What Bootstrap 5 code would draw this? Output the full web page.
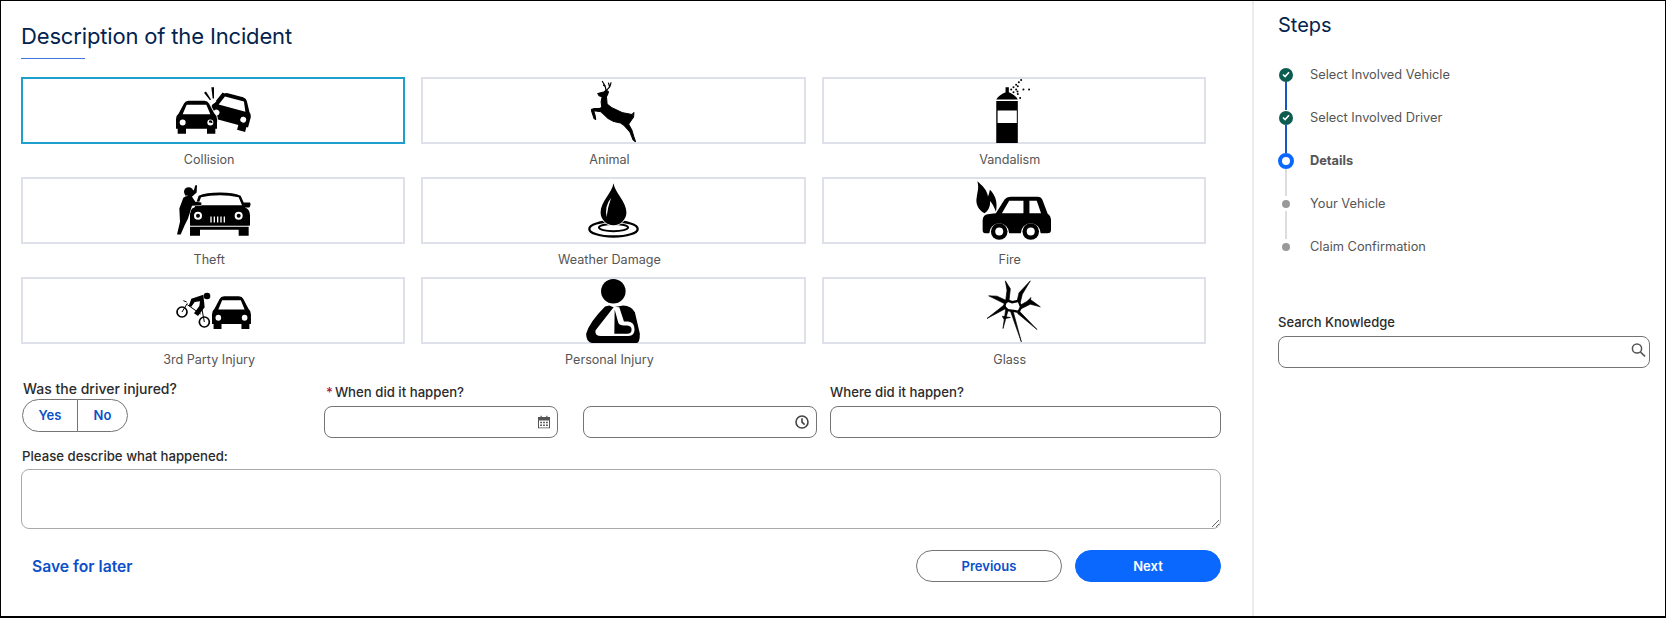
<!DOCTYPE html>
<html lang="en">
<head>
    <meta charset="UTF-8">
    <title>Description of the Incident</title>
    <link href="https://cdn.jsdelivr.net/npm/bootstrap@5.3.0/dist/css/bootstrap.min.css" rel="stylesheet">
    <style>
        body { margin: 0; background: #fff; font-family: Inter, "Liberation Sans", sans-serif; font-size: 13px; color: #444; }
        .page-frame { width: 1666px; height: 618px; border: 1px solid #000; border-bottom-width: 2px; }
        .main-pane { width: 1251px; padding: 0 0 0 20px; flex: none; }
        .main-body { width: 1200px; }
        .side-pane { flex: 1; border-left: 2px solid #ececec; padding: 0 15px 0 24px; }
        .pane-title { font-size: 22px; font-weight: 400; color: #03234d; line-height: 30px; margin: 20px 0 0; letter-spacing: -.16px; }
        .title-rule { width: 64px; height: 1px; background: #3f74e0; margin: 7px 0 18px; }
        .tile-grid { display: grid; grid-template-columns: repeat(3, 384.3px); column-gap: 16px; }
        .tile-item { height: 100px; text-align: center; }
        .tile-box { height: 67px; border: 2px solid #dfe1ea; display: flex; align-items: center; justify-content: center; }
        .tile-box.is-picked { border-color: #1f9fce; }
        .tile-name { line-height: 32px; color: #555; font-size: 12.6px; padding-right: 8px; }
        .field-row { display: grid; grid-template-columns: 303px 234px 259px 404px; margin-top: 2px; }
        .field-label { font-size: 13.2px; font-weight: 500; color: #2b2b2b; line-height: 20px; display: block; margin: 0; }
        .field-label-wide { font-size: 14px; padding-left: 2px; }
        .field-cell { padding-top: 3px; }
        .field-cell-time { padding-left: 25px; }
        .field-cell-place { padding-left: 13px; }
        .field-cell .field-label { margin-bottom: 4px; }
        .req-star { color: #b0124b; margin: 0 2px 0 2px; }
        .field-input { height: 32px; min-height: 0; border: 1px solid #747474; border-radius: 8px; padding: 4px 10px; font-size: 13px; }
        .field-input-tall { height: 60px; border-color: #a9a9a9; }
        .input-glyph { position: absolute; top: 50%; transform: translateY(-50%); }
        .choice-group { margin-left: 1px; height: 33px; }
        .choice-btn { height: 33px; padding: 0; border: 1px solid #747474; color: #0b4fc9; font-size: 13px; font-weight: 600; border-radius: 17px; background: #fff; }
        .choice-yes { width: 56px; }
        .choice-no { width: 51px; }
        .action-btn { width: 146px; height: 32px; padding: 1px 0 0; border-radius: 16px; font-size: 13px; font-weight: 600; }
        .action-back { border: 1px solid #747474; color: #0b4fc9; background: #fff; }
        .action-next { background: #0b68ff; border: 1px solid #0b68ff; color: #fff; }
        .save-link { font-size: 15.7px; font-weight: 600; color: #0b4fc9; text-decoration: none; margin-left: 11px; padding-top: 2px; }
        .step-title { font-size: 20px; color: #03234d; line-height: 28px; margin: 10px 0 0; font-weight: 400; }
        .step-list { list-style: none; margin: 14px 0 0; padding: 0; width: 300px; font-size: 12.8px; }
        .step-row { height: 43px; display: flex; align-items: center; position: relative; color: #555; }
        .step-mark { width: 16px; flex: none; display: flex; justify-content: center; margin-right: 16px; position: relative; z-index: 1; }
        .step-done { width: 14px; height: 14px; border-radius: 50%; background: #0c5c50; display: flex; align-items: center; justify-content: center; }
        .step-now { width: 16px; height: 16px; border-radius: 50%; border: 4px solid #0b68ff; background: #fff; }
        .step-todo { width: 8px; height: 8px; border-radius: 50%; background: #999; }
        .step-row:not(:last-child)::after { content: ""; position: absolute; left: 7px; top: 29px; height: 28px; width: 2px; background: #ddd; }
        .step-row.is-passed::after { background: #1557c0 !important; }
        .knowledge-box { margin-top: 44px; }
    </style>
</head>
<body>

<div class="page-frame d-flex">
    <div class="main-pane">
        <h1 class="pane-title">Description of the Incident</h1>
        <div class="title-rule"></div>

        <div class="tile-grid">
            <div class="tile-item">
                <div class="tile-box is-picked">
                    <svg width="75" height="47" viewBox="0 0 225 140">
                        <defs>
                            <path id="carFront" fill-rule="evenodd" d="M8 38 24 8Q28 0 38 0H85Q95 0 99 8L115 38Q123 44 123 55V84H118V99H93V84H30V99H5V84H0V55Q0 44 8 38ZM32 12 20 40H103L91 12ZM11 65a9 9 0 1 0 18 0a9 9 0 1 0-18 0ZM94 65a9 9 0 1 0 18 0a9 9 0 1 0-18 0Z"/>
                        </defs>
                        <use href="#carFront" transform="translate(104 22) rotate(15 60 50)"/>
                        <use href="#carFront" y="41" stroke="#fff" stroke-width="5" paint-order="stroke"/>
                        <path d="M106 0h8l0 34h-4ZM84 17l6-4 15 24-3 2ZM140 16l6 4-23 23-3-2Z"/>
                    </svg>
                </div>
                <div class="tile-name">Collision</div>
            </div>
            <div class="tile-item">
                <div class="tile-box">
                    <svg width="45" height="62" viewBox="0 0 134 185">
                        <path stroke="#000" stroke-width="3" stroke-linejoin="round" d="M20 40 38 36 45 30 52 35 50 42 46 50 48 72 62 83 95 98 122 103 128 97 127 110 120 120 112 132 122 150 128 170 133 185 125 178 116 155 98 135 88 128 68 124 50 114 30 95 8 92 12 105 14 118 9 115 4 100 0 88 10 85 25 85 32 82 30 65 33 50 24 47Z"/>
                        <path d="M45 32 42 18 33 3M43 20 36 14M47 30 56 20 60 7M55 20 52 8" fill="none" stroke="#000" stroke-width="3.5"/>
                    </svg>
                </div>
                <div class="tile-name">Animal</div>
            </div>
            <div class="tile-item">
                <div class="tile-box">
                    <svg width="35" height="64" viewBox="0 0 104 193">
                        <path fill-rule="evenodd" d="M0 62Q8 48 28 40V25H38V40Q58 48 65 62ZM0 66H65V193H0ZM4 95V133H62V95Z"/>
                        <g>
                            <circle cx="75" cy="3" r="3"/><circle cx="68" cy="10" r="3"/><circle cx="60" cy="17" r="3"/><circle cx="52" cy="25" r="3"/><circle cx="45" cy="32" r="3"/>
                            <circle cx="65" cy="22" r="3"/><circle cx="60" cy="32" r="3"/><circle cx="52" cy="40" r="3"/><circle cx="65" cy="45" r="3"/><circle cx="72" cy="57" r="3"/>
                            <circle cx="82" cy="32" r="3"/><circle cx="99" cy="32" r="3"/><circle cx="64" cy="38" r="3"/>
                        </g>
                    </svg>
                </div>
                <div class="tile-name">Vandalism</div>
            </div>
            <div class="tile-item">
                <div class="tile-box">
                    <svg width="75" height="51" viewBox="0 0 225 152">
                        <path fill-rule="evenodd" d="M68 32Q90 22 132 22 172 22 194 32L203 52H222Q226 60 220 67H206Q222 72 222 90V122H218V152H188V134H72V152H42V134V90Q40 72 56 66ZM75 36 66 60H198L188 36Q160 30 132 30 100 30 75 36ZM54 92a12 12 0 1 0 24 0a12 12 0 1 0-24 0ZM176 92a12 12 0 1 0 24 0a12 12 0 1 0-24 0ZM103 94V112H107V94ZM113 94V112H117V94ZM123 94V112H127V94ZM133 94V112H137V94ZM143 94V112H147V94Z"/>
                        <circle cx="66" cy="92" r="6"/><circle cx="188" cy="92" r="6"/>
                        <path d="M40 122H222V125H40Z" fill="#fff"/>
                        <circle cx="38" cy="20" r="14"/>
                        <path d="M22 38Q30 30 46 32L58 50 76 52V60L48 62 36 100 26 120 14 148H3L12 110 10 70Z" stroke="#fff" stroke-width="3" paint-order="stroke"/>
                        <path d="M34 30 54 14 58 0H63L62 22 42 40Z"/>
                    </svg>
                </div>
                <div class="tile-name">Theft</div>
            </div>
            <div class="tile-item">
                <div class="tile-box">
                    <svg width="51" height="55" viewBox="0 0 154 165">
                        <ellipse cx="77" cy="138" rx="73" ry="23" fill="none" stroke="#000" stroke-width="7"/>
                        <ellipse cx="77" cy="134" rx="44" ry="11" fill="none" stroke="#000" stroke-width="6"/>
                        <path d="M77 0C72 30 38 55 38 88A39 39 0 0 0 116 88C116 55 82 30 77 0Z" stroke="#fff" stroke-width="5" paint-order="stroke"/>
                        <path d="M70 44Q50 68 56 102 60 70 70 44Z" fill="#fff"/>
                    </svg>
                </div>
                <div class="tile-name">Weather Damage</div>
            </div>
            <div class="tile-item">
                <div class="tile-box">
                    <svg width="75" height="59" viewBox="0 0 226 177">
                        <path d="M4 0C18 12 34 26 36 46 40 38 40 32 42 26 58 42 66 62 60 92 54 76 48 66 42 60 44 74 38 90 26 97 8 88-2 70 2 50 4 30 10 20 4 0Z"/>
                        <path fill-rule="evenodd" d="M60 97 86 55Q92 47 104 47H186Q196 47 200 56L216 98Q226 104 226 120V148Q226 157 216 157H195A30 30 0 0 0 135 157H100A30 30 0 0 0 40 157H28Q20 157 20 148V118Q20 100 40 99ZM100 59 78 97H143V59ZM161 59V97H196L183 59Z"/>
                        <circle cx="70" cy="152" r="25"/><circle cx="70" cy="152" r="12" fill="#fff"/>
                        <circle cx="165" cy="152" r="25"/><circle cx="165" cy="152" r="12" fill="#fff"/>
                    </svg>
                </div>
                <div class="tile-name">Fire</div>
            </div>
            <div class="tile-item">
                <div class="tile-box">
                    <svg width="75" height="37" viewBox="0 0 225 111">
                        <use href="#carFront" transform="translate(108 13) scale(.95 .99)"/>
                        <circle cx="18" cy="60" r="15" fill="none" stroke="#000" stroke-width="5"/>
                        <circle cx="85" cy="90" r="15" fill="none" stroke="#000" stroke-width="5"/>
                        <circle cx="93" cy="12" r="10"/>
                        <path d="M82 8 46 20 38 42 46 44 56 30 72 28 70 42 54 64 66 72 86 46Z"/>
                        <path d="M18 60 34 34M32 30 22 26M85 90 78 52M34 38 74 66" fill="none" stroke="#000" stroke-width="3"/>
                    </svg>
                </div>
                <div class="tile-name">3rd Party Injury</div>
            </div>
            <div class="tile-item">
                <div class="tile-box">
                    <svg width="54" height="64" viewBox="0 0 162 193">
                        <circle cx="82" cy="37" r="37"/>
                        <path d="M57 83 70 80 82 85 112 80Q135 80 147 100L162 165Q162 193 152 193H17Q0 190 0 165Q10 130 57 83Z"/>
                        <path d="M84 84 28 155Q26 172 45 172H128Q146 170 146 152 146 130 126 128H114L100 85Z" fill="#fff"/>
                        <path d="M86 92 97 132Q100 140 114 140H124Q137 142 137 152 137 165 124 165H85Z"/>
                    </svg>
                </div>
                <div class="tile-name">Personal Injury</div>
            </div>
            <div class="tile-item">
                <div class="tile-box">
                    <svg width="54" height="62" viewBox="0 0 162 185">
                        <path d="M55 66 65 62 75 66 95 62 102 80 95 95 80 92 62 90 52 80Z" fill="#fff" stroke="#000" stroke-width="7"/>
                        <path stroke="#000" stroke-width="2" stroke-linejoin="round" d="M56 62 60 30 55 2 70 26 66 62ZM90 64 96 38 130 2 106 42 100 66ZM100 75 130 58 160 80 130 72 102 86ZM96 92 150 148 92 100ZM78 92 103 185 70 92ZM64 88 48 145 56 88ZM58 84 0 115 52 74ZM56 72 5 47 30 48 60 62ZM122 62 132 52 128 66ZM46 108 70 112 50 116Z"/>
                    </svg>
                </div>
                <div class="tile-name">Glass</div>
            </div>
        </div>

        <div class="main-body">
            <div class="field-row">
                <div>
                    <label class="field-label field-label-wide">Was the driver injured?</label>
                    <div class="btn-group choice-group" role="group">
                        <button type="button" class="btn choice-btn choice-yes">Yes</button>
                        <button type="button" class="btn choice-btn choice-no">No</button>
                    </div>
                </div>
                <div class="field-cell">
                    <label class="field-label"><span class="req-star">*</span>When did it happen?</label>
                    <div class="position-relative">
                        <input type="text" class="form-control field-input">
                        <svg class="input-glyph end-0 me-2" width="12" height="13" viewBox="0 0 12 13"><path fill="#555" fill-rule="evenodd" d="M2.5 0h1.2v1.5h4.6V0h1.2v1.5H12V13H0V1.5h2.5ZM1 5v7h10V5ZM2.2 6.2h1.8v1.6H2.2ZM5.1 6.2h1.8v1.6H5.1ZM8 6.2h1.8v1.6H8ZM2.2 9h1.8v1.6H2.2ZM5.1 9h1.8v1.6H5.1ZM8 9h1.8v1.6H8Z"/></svg>
                    </div>
                </div>
                <div class="field-cell field-cell-time">
                    <label class="field-label">&nbsp;</label>
                    <div class="position-relative">
                        <input type="text" class="form-control field-input">
                        <svg class="input-glyph end-0 me-2" width="14" height="14" viewBox="0 0 14 14"><circle cx="7" cy="7" r="6" fill="none" stroke="#444" stroke-width="1.6"/><path d="M7 3.2V7.2L9.6 9.6" fill="none" stroke="#444" stroke-width="1.6"/></svg>
                    </div>
                </div>
                <div class="field-cell field-cell-place">
                    <label class="field-label">Where did it happen?</label>
                    <input type="text" class="form-control field-input">
                </div>
            </div>

            <div class="mt-2">
                <label class="field-label" style="margin-left:1px;margin-bottom:3px">Please describe what happened:</label>
                <textarea class="form-control field-input field-input-tall"></textarea>
            </div>

            <div class="d-flex align-items-center justify-content-between" style="margin-top:21px">
                <a href="#" class="save-link">Save for later</a>
                <div class="d-flex" style="gap:13px">
                    <button type="button" class="btn action-btn action-back">Previous</button>
                    <button type="button" class="btn action-btn action-next">Next</button>
                </div>
            </div>
        </div>
    </div>

    <div class="side-pane">
        <h2 class="step-title">Steps</h2>
        <ul class="step-list">
            <li class="step-row is-passed">
                <span class="step-mark"><span class="step-done"><svg width="8" height="7" viewBox="0 0 8 7"><path d="M1 3.5 3.1 5.6 7 1.2" fill="none" stroke="#fff" stroke-width="1.6"/></svg></span></span>
                Select Involved Vehicle
            </li>
            <li class="step-row is-passed">
                <span class="step-mark"><span class="step-done"><svg width="8" height="7" viewBox="0 0 8 7"><path d="M1 3.5 3.1 5.6 7 1.2" fill="none" stroke="#fff" stroke-width="1.6"/></svg></span></span>
                Select Involved Driver
            </li>
            <li class="step-row fw-bold">
                <span class="step-mark"><span class="step-now"></span></span>
                Details
            </li>
            <li class="step-row">
                <span class="step-mark"><span class="step-todo"></span></span>
                Your Vehicle
            </li>
            <li class="step-row">
                <span class="step-mark"><span class="step-todo"></span></span>
                Claim Confirmation
            </li>
        </ul>

        <div class="knowledge-box">
            <label class="field-label" style="font-size:13px;margin-bottom:4px">Search Knowledge</label>
            <div class="position-relative">
                <input type="text" class="form-control field-input">
                <svg class="input-glyph end-0 me-1" style="margin-top:-2px" width="15" height="14" viewBox="0 0 15 14"><circle cx="6" cy="5.5" r="4.6" fill="none" stroke="#555" stroke-width="1.5"/><path d="M9.4 9 14 13.4" stroke="#555" stroke-width="1.7"/></svg>
            </div>
        </div>
    </div>
</div>

<script src="https://cdn.jsdelivr.net/npm/bootstrap@5.3.0/dist/js/bootstrap.bundle.min.js"></script>
</body>
</html>
